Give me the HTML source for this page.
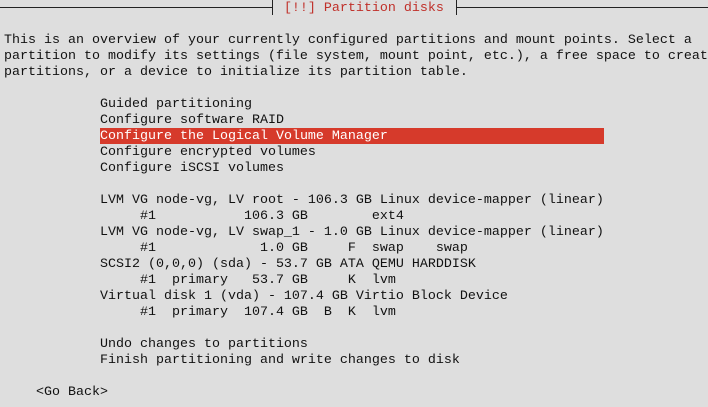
<!DOCTYPE html>
<html><head><style>
html,body{margin:0;padding:0;background:#dedede;width:708px;height:407px;overflow:hidden;}
pre{position:absolute;left:4px;top:1px;margin:0;font-family:"Liberation Mono","DejaVu Sans Mono",monospace;font-size:13.33px;line-height:16px;color:#111;white-space:pre;}
.hl{position:absolute;left:100px;top:128px;width:504px;height:16px;background:#d63a2b;}
.w{color:#fff;}
.t{color:#c0302a;}
.ln{position:absolute;top:7px;height:1px;background:#222;}
.vb{position:absolute;top:0;width:1px;height:15px;background:#222;}
</style></head><body>
<div class="ln" style="left:0;width:272px"></div>
<div class="vb" style="left:272px"></div>
<div class="vb" style="left:456px"></div>
<div class="ln" style="left:456px;width:252px"></div>
<div class="hl"></div>
<pre>                                   <span class="t">[!!] Partition disks</span>

This is an overview of your currently configured partitions and mount points. Select a
partition to modify its settings (file system, mount point, etc.), a free space to creat
partitions, or a device to initialize its partition table.

            Guided partitioning
            Configure software RAID
            <span class="w">Configure the Logical Volume Manager</span>
            Configure encrypted volumes
            Configure iSCSI volumes

            LVM VG node-vg, LV root - 106.3 GB Linux device-mapper (linear)
                 #1           106.3 GB        ext4
            LVM VG node-vg, LV swap_1 - 1.0 GB Linux device-mapper (linear)
                 #1             1.0 GB     F  swap    swap
            SCSI2 (0,0,0) (sda) - 53.7 GB ATA QEMU HARDDISK
                 #1  primary   53.7 GB     K  lvm
            Virtual disk 1 (vda) - 107.4 GB Virtio Block Device
                 #1  primary  107.4 GB  B  K  lvm

            Undo changes to partitions
            Finish partitioning and write changes to disk

    &lt;Go Back&gt;</pre>
</body></html>
